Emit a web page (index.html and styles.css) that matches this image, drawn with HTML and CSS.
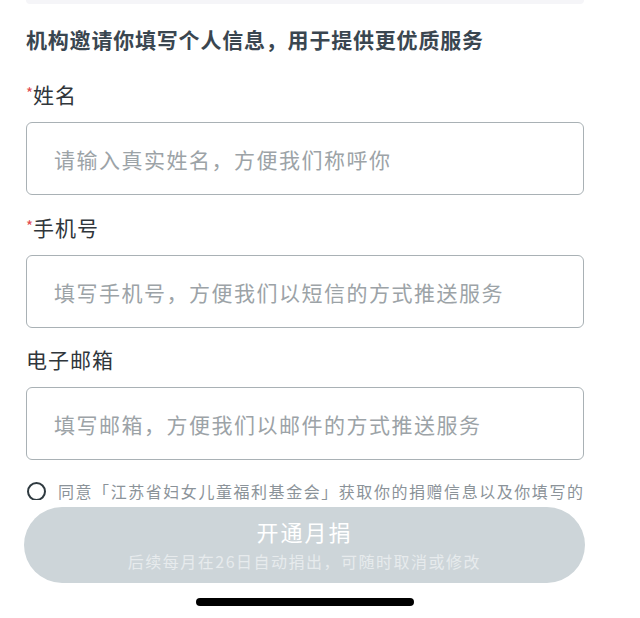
FILE: index.html
```html
<!DOCTYPE html>
<html lang="zh-CN">
<head>
<meta charset="utf-8">
<title>开通月捐</title>
<link rel="stylesheet" href="styles.css">
</head>
<body>
<div class="page">
  <div class="top-card"></div>
  <h1 class="intro">机构邀请你填写个人信息，用于提供更优质服务</h1>

  <div class="field">
    <label class="label"><span class="star">*</span>姓名</label>
    <input class="input" type="text" placeholder="请输入真实姓名，方便我们称呼你">
  </div>

  <div class="field">
    <label class="label"><span class="star">*</span>手机号</label>
    <input class="input" type="text" placeholder="填写手机号，方便我们以短信的方式推送服务">
  </div>

  <div class="field">
    <label class="label">电子邮箱</label>
    <input class="input" type="text" placeholder="填写邮箱，方便我们以邮件的方式推送服务">
  </div>

  <div class="agree">
    <span class="check"></span>
    <span class="agree-text">同意「江苏省妇女儿童福利基金会」获取你的捐赠信息以及你填写的</span>
  </div>
</div>

<div class="footer">
  <button class="submit" type="button">
    <span class="submit-title">开通月捐</span>
    <span class="submit-sub">后续每月在26日自动捐出，可随时取消或修改</span>
  </button>
  <div class="home-bar"></div>
</div>
</body>
</html>
```

FILE: styles.css
```css
* {
  box-sizing: border-box;
}

html, body {
  margin: 0;
  padding: 0;
  background: #ffffff;
}

body {
  font-family: "Noto Sans CJK SC", "Noto Sans", sans-serif;
  color: #333a40;
  height: 618px;
  overflow: hidden;
}

.page {
  padding: 0 56px 0 26px;
  display: flex;
  flex-direction: column;
}

.top-card {
  height: 4px;
  background: #f5f5f8;
  border-radius: 0 0 6px 6px;
}

.intro {
  margin: 21px 0 0;
  font-size: 21px;
  line-height: 28px;
  font-weight: 700;
  letter-spacing: 0.8px;
  color: #3a4650;
  white-space: nowrap;
}

.field {
  margin-top: 26px;
  display: flex;
  flex-direction: column;
  gap: 14px;
}

.field + .field {
  margin-top: 17px;
}

.label {
  font-size: 21px;
  line-height: 28px;
  letter-spacing: 1px;
  color: #30363b;
}

.star {
  color: #e24a50;
  font-size: 15px;
  vertical-align: 4px;
  letter-spacing: 0;
}

.input {
  height: 73px;
  width: 100%;
  border: 1.5px solid #a9b1b5;
  border-radius: 6px;
  padding: 0 0 0 27px;
  font-family: "Noto Sans CJK SC", "Noto Sans", sans-serif;
  font-size: 21px;
  letter-spacing: 1.5px;
  color: #333a40;
  background: #ffffff;
  outline: none;
}

.input::placeholder {
  color: #9ca3a7;
}

.agree {
  margin-top: 20px;
  display: flex;
  align-items: center;
  gap: 12px;
  height: 22px;
  white-space: nowrap;
}

.check {
  flex: none;
  width: 19px;
  height: 19px;
  border: 2.5px solid #2f3a40;
  border-radius: 50%;
  margin-left: 1px;
}

.agree-text {
  font-size: 16px;
  line-height: 22px;
  letter-spacing: 1.55px;
  color: #8b9399;
}

.footer {
  position: fixed;
  left: 0;
  right: 0;
  bottom: 0;
  height: 118px;
  background: #ffffff;
  display: flex;
  flex-direction: column;
  padding: 7px 0 0 24px;
}

.submit {
  width: 561px;
  height: 76px;
  border: none;
  border-radius: 38px;
  background: #cdd5d9;
  display: flex;
  flex-direction: column;
  align-items: center;
  padding: 10px 0 0;
  font-family: "Noto Sans CJK SC", "Noto Sans", sans-serif;
}

.submit-title {
  font-size: 22px;
  line-height: 28px;
  letter-spacing: 2px;
  color: #ffffff;
}

.submit-sub {
  margin-top: 6px;
  font-size: 16px;
  line-height: 20px;
  letter-spacing: 1.5px;
  color: #e7ebed;
}

.home-bar {
  margin: 15px 0 0 172px;
  width: 218px;
  height: 8px;
  border-radius: 4px;
  background: #000000;
}
```
